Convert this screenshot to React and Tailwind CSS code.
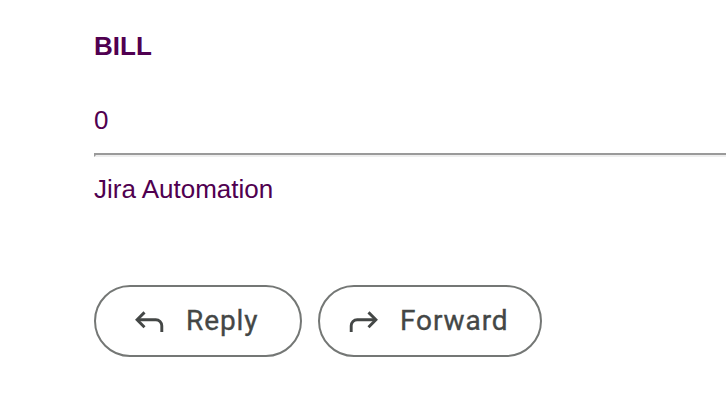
import React from 'react';

const actions = [
  { label: 'Reply', width: 'w-[208px]', pad: 'pl-[37px]', gap: 'gap-[21px]', tracking: 'tracking-[0.9px]', flip: false },
  { label: 'Forward', width: 'w-[224px]', pad: 'pl-[28px]', gap: 'gap-[20px]', tracking: 'tracking-[0.9px]', flip: true },
];

function ArrowIcon({ flip }) {
  return (
    <svg
      width="32"
      height="32"
      viewBox="0 0 32 32"
      fill="none"
      stroke="#444746"
      strokeWidth="2.9"
      className={flip ? 'shrink-0 -scale-x-100' : 'shrink-0'}
    >
      <path d="M11.5 7.4 L4.1 14.8 L11.5 22.2" />
      <path d="M4.1 14.8 H22.8 A6 6 0 0 1 28.8 20.8 V27" />
    </svg>
  );
}

export default function App() {
  return (
    <div className="h-[404px] w-[726px] overflow-hidden bg-white pl-[94px] font-['Liberation_Sans',Arial,sans-serif] text-[26px] leading-[30px] text-[#500050]">
      <p className="pt-[31px] font-bold">BILL</p>
      <p className="mt-[44px]">0</p>
      <hr className="mt-[18px] h-[4px] border-2 border-r-0 border-t-[#9a9a9a] border-l-[#9a9a9a] border-b-[#eeeeee]" />
      <p className="mt-[17px]">Jira Automation</p>

      <div className="mt-[81px] flex gap-4">
        {actions.map((action) => (
          <button
            key={action.label}
            type="button"
            className={`flex h-[72px] items-center rounded-full border-2 border-[#747775] font-['Roboto',sans-serif] text-[28px] text-[#444746] [-webkit-text-stroke:0.35px_#444746] ${action.width} ${action.pad} ${action.gap} ${action.tracking}`}
          >
            <ArrowIcon flip={action.flip} />
            <span className="-mt-px">{action.label}</span>
          </button>
        ))}
      </div>
    </div>
  );
}
